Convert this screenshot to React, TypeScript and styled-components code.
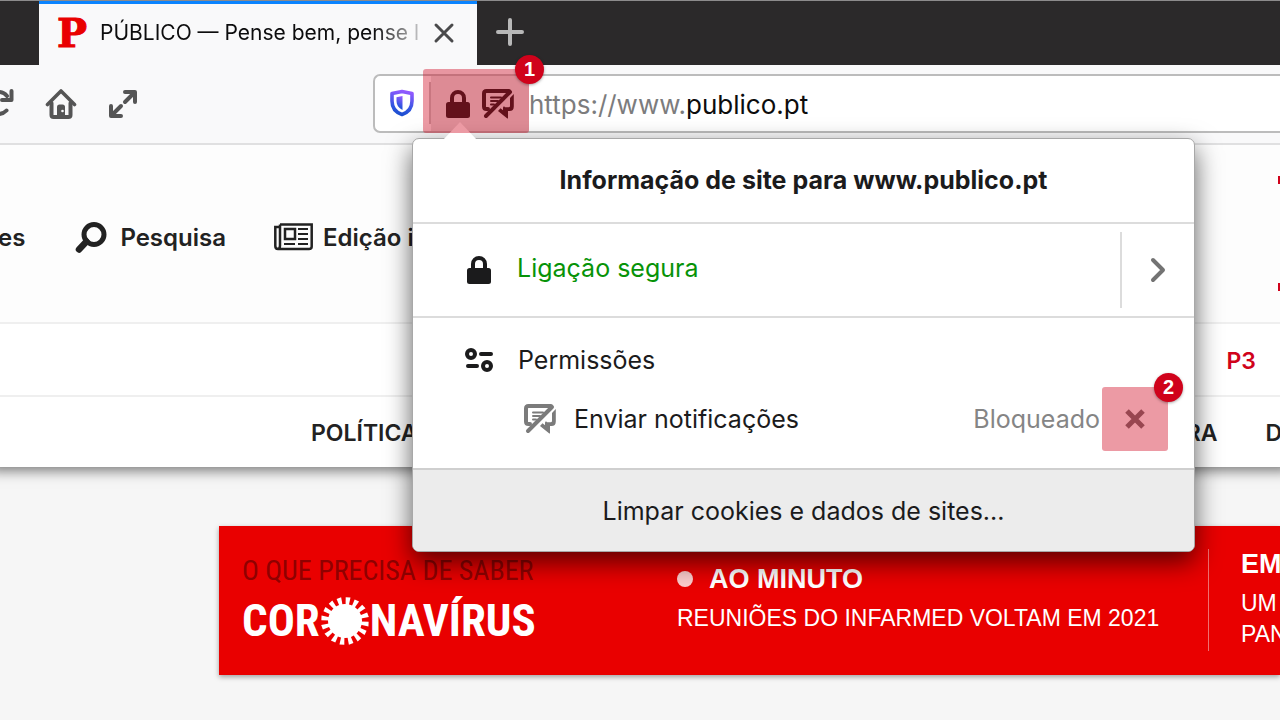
import React from "react";
import styled, { createGlobalStyle, css } from "styled-components";

const ui = `Inter, "Liberation Sans", sans-serif`;
const arial = `"Liberation Sans", Arial, sans-serif`;

const GlobalStyle = createGlobalStyle`
  *, *::before, *::after { box-sizing: border-box; }
  html, body { margin: 0; padding: 0; }
  html { overflow: hidden; }
  body { background: #f6f6f6; font-family: ${ui}; color: #1b1b1c; }
  button { font: inherit; color: inherit; border: 0; padding: 0; background: none; }
  a { color: inherit; text-decoration: none; }
  h1, h2, p { margin: 0; font: inherit; }
  svg { display: block; flex: none; }
`;

const Page = styled.div`
  position: relative;
  min-height: 100vh;
  overflow: hidden;
  white-space: nowrap;
`;

/* Browser chrome */

const TabStrip = styled.div`
  display: flex;
  height: 65px;
  padding-left: 39px;
  background: #2b292a;
  border-top: 1px solid #8c8b8c;
`;

const Tab = styled.div`
  display: flex;
  align-items: center;
  width: 438px;
  padding: 0 22px 3px 18px;
  background: #f9f9fa;
  border-top: 3px solid #0a84ff;
`;

const Favicon = styled.span`
  width: 43px;
  font: bold 40px/40px "DejaVu Serif", serif;
  color: #e90000;
  -webkit-text-stroke: 1px #e90000;
`;

const TabTitle = styled.span`
  flex: 1;
  min-width: 0;
  overflow: hidden;
  font-size: 21px;
  line-height: 30px;
  color: #0c0c0d;
  mask-image: linear-gradient(to right, #000 82%, transparent);
`;

const IconButton = styled.button`
  display: flex;
  align-items: center;
  justify-content: center;
`;

const NewTab = styled(IconButton)`
  width: 66px;
  padding-bottom: 2px;
`;

const Toolbar = styled.div`
  position: relative;
  z-index: 1;
  display: flex;
  align-items: center;
  height: 80px;
  padding-bottom: 2px;
  overflow: hidden;
  background: #f9f9fa;
  border-bottom: 2px solid #e0e0e1;
`;

const ToolButtons = styled.div`
  display: flex;
  align-items: center;
  gap: 31px;
  width: 373px;
  margin-left: -18px;
  margin-right: 18px;
  padding-top: 2px;
`;

const UrlBar = styled.div`
  display: flex;
  flex: 1;
  align-items: center;
  height: 59px;
  padding-left: 14px;
  background: #fff;
  border: 2px solid #bcbcbc;
  border-right: 0;
  border-radius: 7px 0 0 7px;
`;

const Divider = styled.span`
  width: 2px;
  height: 42px;
  margin-left: 14px;
  background: #c4c4c4;
`;

const Identity = styled.button`
  display: flex;
  align-items: center;
  gap: 12px;
  height: 55px;
  padding: 1px 15px 0;
  background: #e7e7e7;
`;

const UrlField = styled.label`
  display: flex;
  flex: 1;
  min-width: 0;
  padding-top: 3px;
  font-size: 26px;
  line-height: 32px;
  color: #7c7c7d;
`;

const UrlInput = styled.input`
  flex: 1;
  min-width: 0;
  padding: 0;
  border: 0;
  outline: 0;
  background: none;
  font: inherit;
  color: #0c0c0d;
`;

/* Web page */

const SiteHeader = styled.header`
  background: #fff;
  box-shadow: 0 -6px 12px 10px rgba(0, 0, 0, 0.5);
`;

const HeaderTop = styled.div`
  display: flex;
  align-items: center;
  justify-content: space-between;
  height: 179px;
  background: #fdfdfd;
  border-bottom: 2px solid #efefef;
`;

const HeaderLinks = styled.div`
  display: flex;
  align-items: center;
  gap: 48px;
  padding-top: 8px;
  margin-left: -2px;
`;

const HeaderLink = styled.a`
  display: flex;
  align-items: center;
  gap: 10px;
  font-size: 24px;
  line-height: 30px;
  font-weight: 600;
  color: #222;
`;

const SectionRow = styled.div`
  display: flex;
  align-items: center;
  justify-content: flex-end;
  height: 73px;
  padding: 2px 24px 0 0;
  border-bottom: 2px solid #efefef;
`;

const NavRow = styled.nav`
  display: flex;
  justify-content: space-between;
  align-items: center;
  height: 70px;
  padding: 2px 0 0 311px;
  margin-right: -2px;
`;

const NavGroup = styled.div`
  display: flex;
  gap: 48px;
`;

const NavLink = styled.a<{ $accent?: boolean }>`
  font-size: 23px;
  line-height: 30px;
  font-weight: 600;
  color: ${(p) => (p.$accent ? "#d0021b" : "#222")};
`;

const Banner = styled.section`
  display: flex;
  height: 149px;
  margin: 59px 0 46px 219px;
  overflow: hidden;
  background: #e90000;
  color: #fff;
  box-shadow: 0 2px 5px rgba(0, 0, 0, 0.35);
`;

const Campaign = styled.div`
  flex: none;
  width: 458px;
  padding: 26px 0 0 23px;
  font-family: "Roboto Condensed", "Liberation Sans Narrow", ${arial};
`;

const CampaignLead = styled.p`
  font-size: 28px;
  line-height: 38px;
  color: #8f0000;
`;

const CampaignTitle = styled.h2`
  display: flex;
  align-items: center;
  font-size: 45px;
  line-height: 62px;
  font-weight: bold;
`;

const Story = styled.article<{ $divided?: boolean }>`
  flex: none;
  margin-top: 23px;
  height: 102px;
  font-family: ${arial};
  ${(p) =>
    p.$divided
      ? css`
          padding-left: 32px;
          border-left: 1px solid #f07070;
        `
      : css`
          width: 531px;
          padding-top: 15px;
        `}
`;

const StoryTitle = styled.h2`
  display: flex;
  align-items: center;
  gap: 16px;
  font-size: 27px;
  line-height: 30px;
  font-weight: bold;
  margin-bottom: 9px;
`;

const Dot = styled.i`
  width: 16px;
  height: 16px;
  border-radius: 50%;
  background: #fccccc;
`;

const StoryText = styled.p`
  font-size: 23px;
  line-height: 31px;
`;

/* Site information panel */

const Panel = styled.div`
  position: absolute;
  z-index: 2;
  top: 138px;
  left: 412px;
  width: 783px;
  background: #fff;
  border: 1px solid #a8a8a8;
  border-radius: 7px;
  box-shadow: 0 10px 26px rgba(0, 0, 0, 0.62);
`;

const PanelArrow = styled.svg`
  position: absolute;
  top: -17px;
  left: 30px;
`;

const PanelTitle = styled.h1`
  padding: 25px 0;
  font-size: 25px;
  line-height: 33px;
  font-weight: 700;
  text-align: center;
`;

const SecureRow = styled.div`
  display: flex;
  align-items: center;
  gap: 26px;
  height: 96px;
  padding-left: 54px;
  border: solid #dcdcdc;
  border-width: 2px 0;
`;

const RowLabel = styled.span`
  flex: 1;
  font-size: 25px;
  line-height: 32px;
`;

const SecureLabel = styled(RowLabel)`
  padding-bottom: 4px;
  color: #079308;
`;

const MoreButton = styled(IconButton)`
  width: 74px;
  height: 76px;
  border-left: 2px solid #dcdcdc;
`;

const Permissions = styled.div`
  padding: 26px 26px 17px 52px;
`;

const PermissionHead = styled.div`
  display: flex;
  align-items: center;
  gap: 24px;
  margin-bottom: 11px;
`;

const PermissionRow = styled.div`
  display: flex;
  align-items: center;
  padding-left: 59px;
`;

const PermissionName = styled(RowLabel)`
  padding-left: 18px;
`;

const PermissionState = styled.span`
  font-size: 25px;
  line-height: 32px;
  color: #858585;
`;

const RemoveButton = styled(IconButton)`
  position: relative;
  width: 66px;
  height: 64px;
  margin-left: 2px;
`;

const ClearButton = styled.button`
  width: 100%;
  height: 83px;
  font-size: 25px;
  line-height: 32px;
  background: #ececec;
  border-top: 2px solid #cfcfcf;
  border-radius: 0 0 6px 6px;
`;

/* Numbered callouts */

const Callout = styled.span<{ $inset?: boolean }>`
  position: absolute;
  z-index: 3;
  background: rgba(208, 2, 27, 0.4);
  border-radius: 3px;
  ${(p) => (p.$inset ? "inset: 0;" : "top: 69px; left: 423px; width: 106px; height: 64px;")}
`;

const CalloutNumber = styled.span`
  position: absolute;
  top: -14px;
  right: -15px;
  width: 29px;
  height: 29px;
  border-radius: 50%;
  background: #d0021b;
  color: #fff;
  font: bold 20px/29px ${arial};
  text-align: center;
  box-shadow: 0 1px 3px rgba(0, 0, 0, 0.35);
`;

const LockIcon = () => (
  <svg width="24" height="28" viewBox="0 0 24 28">
    <path d="M6 13V8a6 6 0 0 1 12 0v5" fill="none" stroke="#1b1b1c" strokeWidth="4" />
    <rect y="12" width="24" height="16" rx="2.5" fill="#1b1b1c" />
  </svg>
);

const BlockedIcon = ({ color }: { color: string }) => (
  <svg width="32" height="30" viewBox="0 0 32 30" fill="none" stroke={color} strokeLinecap="round" strokeLinejoin="round">
    <path d="M6 20H4.500Q2 20 2 17.500V4.500Q2 2 4.500 2H27" strokeWidth="4" />
    <path d="M4 27 28 3" strokeWidth="4" />
    <path d="M9 8.500H19M9 12H16M9 15.500H12" strokeWidth="2" />
    <path d="M31.800 5V17.500Q31.800 22 27.500 22H26V29Q26 30 25 29.200L16 22 18.500 19.300 22 22V18.300H26.500Q28 18.300 28 17V9Z" fill={color} stroke="none" />
    <path d="M22 18.500V24" strokeWidth="2" />
  </svg>
);

const Virus = () => (
  <svg width="50" height="48" viewBox="-25 -24 50 48" fill="#fff">
    <circle r="17" />
    {Array.from({ length: 16 }, (_, i) => (
      <path key={i} d="M-1.500-15-2.600-23.500 2.200-24 1.500-15Z" transform={`rotate(${i * 22.5 + 8})`} />
    ))}
  </svg>
);

export default function App() {
  return (
    <Page>
      <GlobalStyle />
      <TabStrip>
        <Tab>
          <Favicon>P</Favicon>
          <TabTitle>PÚBLICO — Pense bem, pense l</TabTitle>
          <IconButton aria-label="Fechar separador">
            <svg width="22" height="22" viewBox="0 0 22 22" stroke="#4a4a4b" strokeWidth="3" strokeLinecap="round">
              <path d="M3 3 19 19M19 3 3 19" />
            </svg>
          </IconButton>
        </Tab>
        <NewTab aria-label="Novo separador">
          <svg width="28" height="28" viewBox="0 0 28 28" stroke="#b8b8b8" strokeWidth="4" strokeLinecap="round">
            <path d="M14 2V26M2 14H26" />
          </svg>
        </NewTab>
      </TabStrip>

      <Toolbar>
        <ToolButtons>
          <IconButton aria-label="Recarregar">
            <svg width="32" height="32" viewBox="0 0 32 32" fill="none" stroke="#555" strokeWidth="4" strokeLinecap="round" strokeLinejoin="round">
              <path d="M24.500 22.500A11 11 0 1 1 25 8" />
              <path d="M29.500 3V12H20" />
            </svg>
          </IconButton>
          <IconButton aria-label="Página inicial">
            <svg width="32" height="32" viewBox="0 0 32 32" fill="none" stroke="#555" strokeWidth="4" strokeLinecap="round" strokeLinejoin="round">
              <path d="M2.500 16.500 16 3 29.500 16.500" strokeWidth="3.600" />
              <path d="M6.500 15V27Q6.500 29 8.500 29H23.500Q25.500 29 25.500 27V15" />
              <path d="M12 29V19Q12 16.500 14.500 16.500H17.500Q20 16.500 20 19V29Z" fill="#555" stroke="none" />
              <circle cx="17.500" cy="23" r="1.300" fill="#f9f9fa" stroke="none" />
            </svg>
          </IconButton>
          <IconButton aria-label="Ecrã completo">
            <svg width="30" height="30" viewBox="0 0 30 30" fill="none" stroke="#555" strokeWidth="4" strokeLinecap="round" strokeLinejoin="round">
              <path d="M17 3H27V13M26 4 17 13M3 17V27H13M4 26 13 17" />
            </svg>
          </IconButton>
        </ToolButtons>
        <UrlBar>
          <svg width="26" height="28" viewBox="0 0 26 28" fill="none">
            <defs>
              <linearGradient id="shield" x1="0.6" y1="0" x2="0.4" y2="1">
                <stop offset="0" stopColor="#9059ff" />
                <stop offset="0.7" stopColor="#2f55e0" />
                <stop offset="1" stopColor="#1d4fd0" />
              </linearGradient>
            </defs>
            <path d="M13 2.500 23 4.500V12C23 19 19 23.500 13 25.500 7 23.500 3 19 3 12V4.500Z" stroke="url(#shield)" strokeWidth="3.600" strokeLinejoin="round" />
            <path d="M13.500 7V21C9.500 19 7.500 16 7.500 12V8.300Z" fill="url(#shield)" />
          </svg>
          <Divider />
          <Identity aria-label="Informação do site">
            <LockIcon />
            <BlockedIcon color="#1b1b1c" />
          </Identity>
          <UrlField>
            https://www.
            <UrlInput type="text" defaultValue="publico.pt" aria-label="Endereço" />
          </UrlField>
        </UrlBar>
      </Toolbar>

      <SiteHeader>
        <HeaderTop>
          <HeaderLinks>
            <HeaderLink href="#">es</HeaderLink>
            <HeaderLink href="#">
              <svg width="37" height="32" viewBox="-1 0 37 32" fill="none" stroke="#222">
                <circle cx="20" cy="12.500" r="10" strokeWidth="5" />
                <path d="M12.500 19.500 5 27.500" strokeWidth="6.500" strokeLinecap="round" />
              </svg>
              Pesquisa
            </HeaderLink>
            <HeaderLink href="#">
              <svg width="39" height="30" viewBox="0 0 39 30" fill="none" stroke="#222" strokeWidth="2.500">
                <path d="M6 1.500H37.700V23.500Q37.700 26 35 26H4Q1.300 26 1.300 23V4H6M6 1.500V22.500Q6 26 3.500 26" />
                <rect x="11" y="6" width="10" height="10" />
                <path d="M24 6H34M24 11H34M24 16H34M10 21H21M24 21H34" strokeWidth="2" />
              </svg>
              Edição i
            </HeaderLink>
          </HeaderLinks>
          <svg width="2" height="116" viewBox="0 0 2 116">
            <path d="M0 0H2V8H0ZM0 107H2V115H0Z" fill="#d0021b" />
          </svg>
        </HeaderTop>
        <SectionRow>
          <NavLink href="#" $accent>P3</NavLink>
        </SectionRow>
        <NavRow>
          <NavLink href="#">POLÍTICA</NavLink>
          <NavGroup>
            <NavLink href="#">CULTURA</NavLink>
            <NavLink href="#">D</NavLink>
          </NavGroup>
        </NavRow>
      </SiteHeader>

      <Banner>
        <Campaign>
          <CampaignLead>O QUE PRECISA DE SABER</CampaignLead>
          <CampaignTitle aria-label="Coronavírus">
            COR
            <Virus />
            NAVÍRUS
          </CampaignTitle>
        </Campaign>
        <Story>
          <StoryTitle><Dot />AO MINUTO</StoryTitle>
          <StoryText>REUNIÕES DO INFARMED VOLTAM EM 2021</StoryText>
        </Story>
        <Story $divided>
          <StoryTitle>EM</StoryTitle>
          <StoryText>UM</StoryText>
          <StoryText>PAN</StoryText>
        </Story>
      </Banner>

      <Panel role="dialog" aria-label="Informação de site">
        <PanelArrow width="34" height="18" viewBox="0 0 34 18">
          <path d="M0 18 17 0 34 18Z" fill="#fff" />
        </PanelArrow>
        <PanelTitle>Informação de site para www.publico.pt</PanelTitle>
        <SecureRow>
          <LockIcon />
          <SecureLabel>Ligação segura</SecureLabel>
          <MoreButton aria-label="Mostrar detalhes">
            <svg width="16" height="26" viewBox="0 0 16 26" fill="none" stroke="#737373" strokeWidth="4" strokeLinecap="round" strokeLinejoin="round">
              <path d="M3 3 13 13 3 23" />
            </svg>
          </MoreButton>
        </SecureRow>
        <Permissions>
          <PermissionHead>
            <svg width="29" height="24" viewBox="0 0 29 24" fill="none" stroke="#1b1b1c" strokeWidth="4" strokeLinecap="round">
              <circle cx="6" cy="6" r="4" />
              <path d="M16 6H26M3 18H12" />
              <circle cx="22" cy="18" r="4" />
            </svg>
            <RowLabel>Permissões</RowLabel>
          </PermissionHead>
          <PermissionRow>
            <BlockedIcon color="#7b7b7b" />
            <PermissionName>Enviar notificações</PermissionName>
            <PermissionState>Bloqueado</PermissionState>
            <RemoveButton aria-label="Remover permissão">
              <svg width="20" height="20" viewBox="0 0 20 20" stroke="#737373" strokeWidth="5">
                <path d="M2 2 18 18M18 2 2 18" />
              </svg>
              <Callout $inset><CalloutNumber>2</CalloutNumber></Callout>
            </RemoveButton>
          </PermissionRow>
        </Permissions>
        <ClearButton>Limpar cookies e dados de sites...</ClearButton>
      </Panel>

      <Callout><CalloutNumber>1</CalloutNumber></Callout>
    </Page>
  );
}
